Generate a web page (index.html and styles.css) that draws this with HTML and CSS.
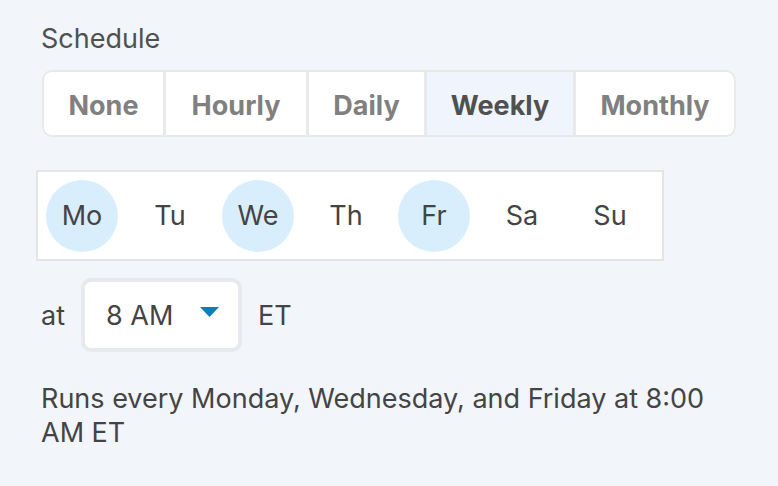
FILE: index.html
```html
<!DOCTYPE html>
<html>
<head>
<meta charset="utf-8">
<link rel="stylesheet" href="styles.css">
</head>
<body>
<div class="panel">
  <div class="label">Schedule</div>
  <div class="segmented">
    <div class="seg seg-none">None</div>
    <div class="seg seg-hourly">Hourly</div>
    <div class="seg seg-daily">Daily</div>
    <div class="seg seg-weekly active">Weekly</div>
    <div class="seg seg-monthly">Monthly</div>
  </div>
  <div class="days">
    <div class="day on">Mo</div>
    <div class="day">Tu</div>
    <div class="day on">We</div>
    <div class="day">Th</div>
    <div class="day on">Fr</div>
    <div class="day">Sa</div>
    <div class="day">Su</div>
  </div>
  <div class="time-row">
    <span>at</span>
    <div class="select">
      <span>8 AM</span>
      <svg class="caret" width="19" height="10" viewBox="0 0 19 10"><path d="M0 0H19L9.5 10Z" fill="#0b7db8"/></svg>
    </div>
    <span>ET</span>
  </div>
  <p class="summary">Runs every Monday, Wednesday, and Friday at 8:00 AM ET</p>
</div>
</body>
</html>
```
FILE: styles.css
```css
html, body {
  margin: 0;
  padding: 0;
  background: #f2f5fa;
}
body {
  font-family: Inter, "Liberation Sans", sans-serif;
  color: #444;
}
.panel {
  padding: 23px 0 0 41px;
  width: 696px;
  display: flex;
  flex-direction: column;
  align-items: flex-start;
}
.label {
  font-size: 27px;
  line-height: 32px;
  color: #505050;
}
.segmented {
  margin-top: 15px;
  margin-left: 1px;
  display: flex;
  background: #fff;
  border: 2px solid #e8e9eb;
  border-radius: 10px;
  overflow: hidden;
  height: 63px;
}
.seg {
  display: flex;
  align-items: center;
  justify-content: center;
  box-sizing: border-box;
  flex: none;
  padding-top: 3px;
  font-size: 27px;
  font-weight: 700;
  color: #808080;
}
.seg + .seg {
  border-left: 3px solid #e8e9eb;
}
.seg-none { width: 119px; }
.seg-hourly { width: 143px; }
.seg-daily { width: 118px; }
.seg-weekly { width: 149px; }
.seg-monthly { width: 161px; }
.seg.active {
  background: #eff4fd;
  color: #505050;
}
.days {
  margin-top: 33px;
  margin-left: -5px;
  width: 616px;
  box-sizing: content-box;
  height: 87px;
  border: 2px solid #e3e4e6;
  background: #fff;
  display: flex;
  align-items: center;
  gap: 16px;
  padding: 0 0 0 8px;
}
.day {
  width: 72px;
  height: 72px;
  border-radius: 50%;
  display: flex;
  align-items: center;
  justify-content: center;
  font-size: 27px;
  color: #444;
}
.day.on {
  background: #d9eefc;
}
.time-row {
  margin-top: 17px;
  display: flex;
  align-items: center;
  gap: 16px;
  font-size: 27px;
  color: #444;
}
.select {
  display: flex;
  align-items: center;
  justify-content: space-between;
  box-sizing: border-box;
  width: 161px;
  height: 74px;
  padding: 0 19px 0 21px;
  background: #fff;
  border: 4px solid #e7e9ed;
  border-radius: 10px;
}
.caret {
  margin-top: -6px;
}
.summary {
  margin: 30px 0 0;
  font-size: 27px;
  line-height: 34px;
  color: #444;
}
```
